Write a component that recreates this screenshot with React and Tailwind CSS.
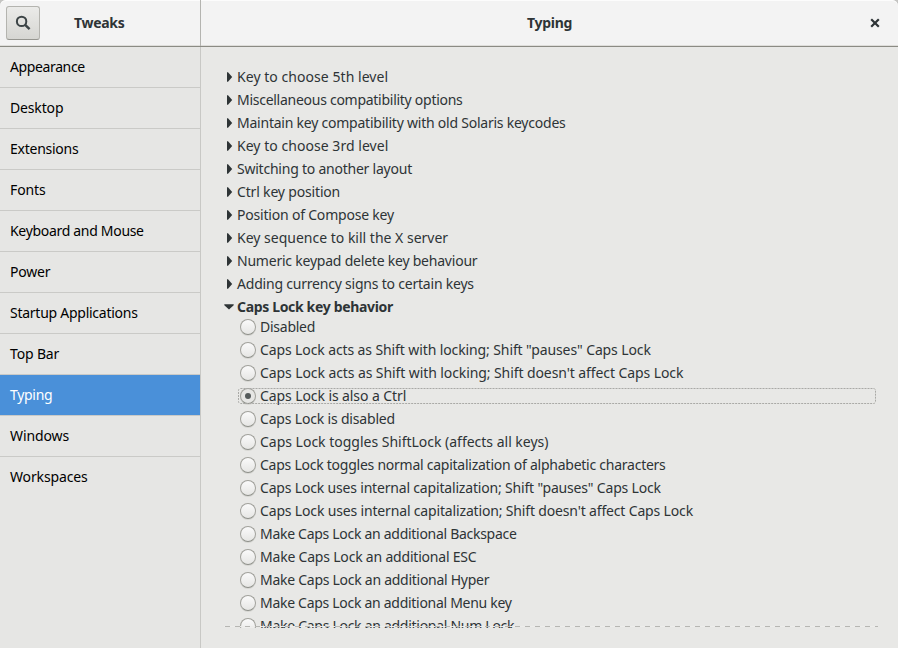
const sidebar = [
  ['Appearance', 'tracking-[-0.38px]'],
  ['Desktop', 'tracking-[-0.15px]'],
  ['Extensions', 'tracking-[-0.25px]'],
  ['Fonts', 'tracking-[-0.1px]'],
  ['Keyboard and Mouse', 'tracking-[-0.31px]'],
  ['Power', 'tracking-[-0.2px]'],
  ['Startup Applications', 'tracking-[-0.26px]'],
  ['Top Bar', 'tracking-[-0.15px]'],
  ['Typing', 'tracking-[-0.3px]'],
  ['Windows', 'tracking-[-0.1px]'],
  ['Workspaces', 'tracking-[-0.13px]'],
];

const groups = [
  ['Key to choose 5th level', 'tracking-[0.05px]'],
  ['Miscellaneous compatibility options', 'tracking-[-0.27px]'],
  ['Maintain key compatibility with old Solaris keycodes', 'tracking-[-0.23px]'],
  ['Key to choose 3rd level', 'tracking-[0.04px]'],
  ['Switching to another layout', 'tracking-[-0.23px]'],
  ['Ctrl key position', 'tracking-[-0.17px]'],
  ['Position of Compose key', 'tracking-[-0.2px]'],
  ['Key sequence to kill the X server', 'tracking-[0px]'],
  ['Numeric keypad delete key behaviour', 'tracking-[-0.22px]'],
  ['Adding currency signs to certain keys', 'tracking-[-0.21px]'],
];

const options = [
  ['Disabled', 'tracking-[-0.25px]'],
  ['Caps Lock acts as Shift with locking; Shift "pauses" Caps Lock', 'tracking-[-0.11px]'],
  ["Caps Lock acts as Shift with locking; Shift doesn't affect Caps Lock", 'tracking-[-0.09px]'],
  ['Caps Lock is also a Ctrl', 'tracking-[-0.09px]'],
  ['Caps Lock is disabled', 'tracking-[-0.18px]'],
  ['Caps Lock toggles ShiftLock (affects all keys)', 'tracking-[-0.01px]'],
  ['Caps Lock toggles normal capitalization of alphabetic characters', 'tracking-[-0.25px]'],
  ['Caps Lock uses internal capitalization; Shift "pauses" Caps Lock', 'tracking-[-0.18px]'],
  ["Caps Lock uses internal capitalization; Shift doesn't affect Caps Lock", 'tracking-[-0.16px]'],
  ['Make Caps Lock an additional Backspace', 'tracking-[-0.29px]'],
  ['Make Caps Lock an additional ESC', 'tracking-[-0.2px]'],
  ['Make Caps Lock an additional Hyper', 'tracking-[-0.27px]'],
  ['Make Caps Lock an additional Menu key', 'tracking-[-0.29px]'],
  ['Make Caps Lock an additional Num Lock', 'tracking-[-0.28px]'],
];

function Radio({ checked }) {
  return (
    <span className={`flex h-4 w-4 shrink-0 items-center justify-center rounded-full border border-[#a1a19c] border-b-[#8d8f89] shadow-[0_1px_0_#d6d6d3] ${checked ? 'bg-[#e6e6e4]' : 'bg-linear-to-b from-[#fafafa] to-[#e6e6e4]'}`}>
      {checked && <span className="h-1.5 w-1.5 rounded-full bg-[#555b5b]" />}
    </span>
  );
}

export default function App() {
  return (
    <div className="flex h-[648px] w-[898px] flex-col overflow-hidden bg-[#e8e8e6] font-['Noto_Sans',sans-serif] text-[14px] text-[#2e3436]">
      <div className="shrink-0 bg-[#c4c4c2]">
        <header className="flex h-[47px] rounded-t-[6px] border-b border-[#8b8b84] bg-[#f3f3f3] shadow-[inset_0_1px_0_#fcfcfc,inset_0_-1px_0_#deddda]">
          <div className="flex w-[201px] items-center border-r border-[#b4b4b0] pl-1.5">
            <button className="flex h-[34px] w-[34px] items-center justify-center rounded-[3px] border border-[#b4b4af] border-b-[#969690] bg-linear-to-b from-[#ebebe9] to-[#d6d6d2]">
              <svg width="16" height="16" viewBox="0 0 16 16" fill="none" stroke="#3c4446">
                <circle cx="6.6" cy="6.4" r="4.7" strokeWidth="2" />
                <path d="M9.9 9.7 L14.6 14.2" strokeWidth="2.5" />
              </svg>
            </button>
            <h1 className="ml-[34px] pb-[2px] text-[14px] font-bold tracking-[-0.3px]">Tweaks</h1>
          </div>
          <div className="flex flex-1 items-center">
            <h2 className="flex-1 pb-[2px] text-center text-[14px] font-bold tracking-[-0.3px]">Typing</h2>
            <button className="-ml-[28px] mr-[18px] flex w-[10px] justify-center">
              <svg width="10" height="10" viewBox="0 0 10 10" stroke="#2e3436" strokeWidth="2.2">
                <path d="M1.2 1.2 L8.8 8.8 M8.8 1.2 L1.2 8.8" />
              </svg>
            </button>
          </div>
        </header>
      </div>
      <div className="flex min-h-0 flex-1">
        <nav className="w-[201px] shrink-0 border-r border-[#c8c8c5] bg-[#e6e6e4] text-black">
          {sidebar.map(([s, tracking], i) => (
            <div
              key={s}
              className={`flex h-[41px] items-center whitespace-pre pb-[2px] pl-2.5 ${tracking} ${i < 10 ? 'border-b border-[#cacac7]' : ''} ${s === 'Typing' ? 'bg-[#4a90d9] text-white' : ''}`}
            >
              {s}
            </div>
          ))}
        </nav>
        <main className="flex-1 pl-[23px] pr-[20px] pt-[18px]">
          <div className="relative h-[563px] overflow-hidden whitespace-pre pl-px">
            {groups.map(([g, tracking]) => (
              <div key={g} className={`flex h-[23px] items-center ${tracking}`}>
                <svg className="ml-[2px] mr-[4px] shrink-0" width="6" height="10" viewBox="0 0 6 10">
                  <path d="M0 0.3 H1 L5.2 5 L1 9.7 H0 Z" fill="#2e3436" />
                </svg>
                <span>{g}</span>
              </div>
            ))}
            <div className="-ml-px flex h-[23px] items-center font-bold tracking-[-0.34px]">
              <svg className="mr-[3px] mt-px shrink-0" width="10" height="6" viewBox="0 0 10 6">
                <path d="M0.3 0.3 H9.7 V1.2 L5 5.6 L0.3 1.2 Z" fill="#2e3436" />
              </svg>
              <span>Caps Lock key behavior</span>
            </div>
            <div className="-mt-[3px]">
              {options.map(([o, tracking], i) => (
                <div key={o} className="h-[23px] pl-[13px] pr-[2px] pt-1">
                  <div className="relative flex h-4 items-center pl-[2px]">
                    {i === 3 && (
                      <svg className="absolute inset-0 h-full w-full" width="638" height="16" viewBox="0 0 638 16">
                        <rect x="0.5" y="0.5" width="637" height="15" rx="2" fill="none" stroke="#a9a9a6" strokeDasharray="2 1" />
                      </svg>
                    )}
                    <Radio checked={i === 3} />
                    <span className={`mb-px ml-1 ${tracking}`}>{o}</span>
                  </div>
                </div>
              ))}
            </div>
            <div className="absolute bottom-[1px] left-0 h-px w-full bg-[repeating-linear-gradient(90deg,#ededeb_0_1px,#b6b6b3_1px_6px,#ededeb_6px_10px)]" />
          </div>
        </main>
      </div>
    </div>
  );
}
